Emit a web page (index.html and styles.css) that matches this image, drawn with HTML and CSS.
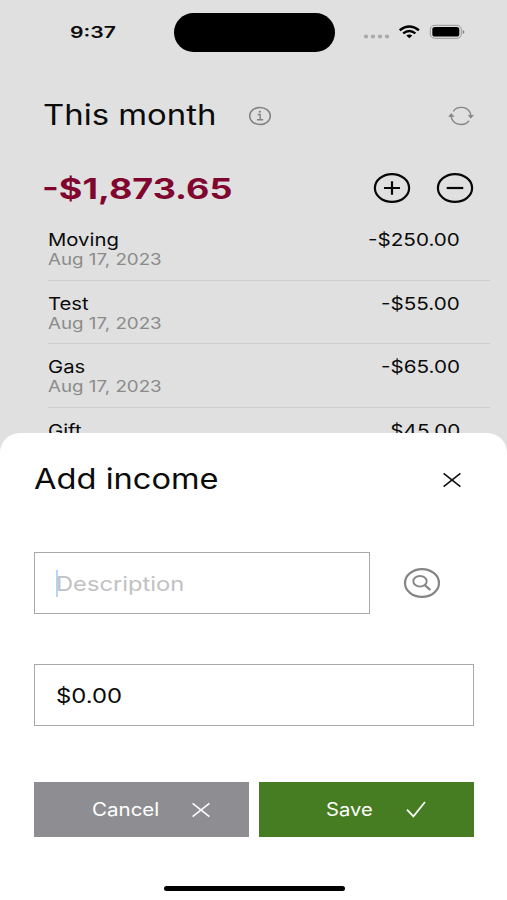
FILE: index.html
```html
<!DOCTYPE html>
<html lang="en">
<head>
<meta charset="utf-8">
<meta name="viewport" content="width=device-width, initial-scale=1">
<title>This month</title>
<link rel="stylesheet" href="styles.css">
</head>
<body>
<div class="phone">
  <main class="screen">
    <header class="status">
      <span class="wide clock">9:37</span>
      <div class="island"></div>
      <svg class="status-icons" width="104" height="20" viewBox="0 0 104 20">
        <g fill="#a9a9a9"><circle cx="4" cy="14.5" r="2.1"/><circle cx="11" cy="14.5" r="2.1"/><circle cx="18" cy="14.5" r="2.1"/><circle cx="25" cy="14.5" r="2.1"/></g>
        <g fill="none" stroke="#000" stroke-width="2.4"><path d="M37.700 8.200Q47.300 0.800 56.900 8.200"/><path d="M41.200 11.400Q47.300 6.700 53.400 11.400"/></g>
        <path d="M44.300 13.600Q47.300 11.200 50.300 13.600L47.300 16.200Z"/>
        <rect x="68.300" y="3.300" width="31" height="13" rx="4.300" fill="none" stroke="#989898"/>
        <rect x="70.300" y="5.100" width="27" height="9.400" rx="2.600"/>
        <path d="M100.700 8v4q1.800-.4 1.800-2t-1.800-2z" fill="#858585"/>
      </svg>
    </header>
    <section class="heading">
      <h1 class="wide title">This month</h1>
      <svg class="info" width="24" height="20" viewBox="0 0 24 20" fill="none" stroke="#828282" stroke-width="1.500">
        <ellipse cx="12" cy="10" rx="10.300" ry="8.600"/>
        <path d="M9.700 8.500h2.500v5M9 13.700h6.200" stroke-width="1.400"/>
        <ellipse cx="11.800" cy="5.700" rx="1.200" ry="1" fill="#828282" stroke="none"/>
      </svg>
      <svg class="refresh" width="26" height="20" viewBox="0 0 26 20" fill="none" stroke="#858585" stroke-width="1.400">
        <path d="M5.300 5.300C8.500.3 17.600-.1 21.200 5.200 22.200 6.600 22.800 8 22.800 9.500M21 14.600C17.600 19.700 8.300 19.900 4.900 14.700 3.800 13.200 3.200 11.800 3.200 10.200"/>
        <path d="M.7 10.500L3.200 7.500 6 10.500ZM20.200 9.300H25.400L22.800 12.300Z" fill="#858585" stroke-width=".6"/>
      </svg>
    </section>
    <section class="balance">
      <span class="wide total">-$1,873.65</span>
      <div class="actions">
        <svg width="38" height="32" viewBox="0 0 38 32" fill="none" stroke="#080808" stroke-width="2.200"><ellipse cx="19" cy="16" rx="17.100" ry="13.900"/><path d="M11 16h16M19 9.300v13.400"/></svg>
        <svg width="38" height="32" viewBox="0 0 38 32" fill="none" stroke="#080808" stroke-width="2.200"><ellipse cx="19" cy="16" rx="17.100" ry="13.900"/><path d="M10.700 16h16.600"/></svg>
      </div>
    </section>
    <ul class="entries">
      <li><div class="entry"><span class="wide name">Moving</span><span class="wide date">Aug 17, 2023</span></div><span class="wide amount">-$250.00</span></li>
      <li><div class="entry"><span class="wide name">Test</span><span class="wide date">Aug 17, 2023</span></div><span class="wide amount">-$55.00</span></li>
      <li><div class="entry"><span class="wide name">Gas</span><span class="wide date">Aug 17, 2023</span></div><span class="wide amount">-$65.00</span></li>
      <li><div class="entry"><span class="wide name">Gift</span></div><span class="wide amount">$45.00</span></li>
    </ul>
  </main>
  <section class="sheet">
    <div class="sheet-head">
      <h2 class="wide sheet-title">Add income</h2>
      <svg width="20" height="16" viewBox="0 0 20 16" fill="none" stroke="#111" stroke-width="1.600"><path d="M1.600 1.300L18.400 14.700M18.400 1.300L1.600 14.700"/></svg>
    </div>
    <div class="row">
      <div class="field description"><i class="caret"></i><span class="wide placeholder">Description</span></div>
      <svg width="38" height="32" viewBox="0 0 38 32" fill="none" stroke="#858587"><ellipse cx="19" cy="16" rx="17" ry="13.900" stroke-width="2.200"/><ellipse cx="17" cy="14.300" rx="6.700" ry="5.300" stroke-width="1.900"/><path d="M21.800 18.200L27.400 23" stroke-width="2.300"/></svg>
    </div>
    <div class="field"><span class="wide value">$0.00</span></div>
    <div class="buttons">
      <div class="button cancel"><span class="wide cancel-label">Cancel</span><svg width="20" height="16" viewBox="0 0 20 16" fill="none" stroke="#fff" stroke-width="1.500"><path d="M1.600 1.300L18.400 14.700M18.400 1.300L1.600 14.700"/></svg></div>
      <div class="button save"><span class="wide save-label">Save</span><svg width="20" height="17" viewBox="0 0 20 17" fill="none" stroke="#fff" stroke-width="1.700"><path d="M1 8.700L7.400 15.400 19 1"/></svg></div>
    </div>
    <div class="home"></div>
  </section>
</div>
</body>
</html>
```
FILE: styles.css
```css
* { box-sizing: border-box; }
body { margin: 0; font-family: Inter, "Liberation Sans", sans-serif; color: #0b0b0b; background: #e0e0e0; }
h1, h2, ul { margin: 0; padding: 0; font-weight: 400; }
svg { display: block; flex: none; }
.phone { width: 507px; height: 900px; overflow: hidden; display: flex; flex-direction: column; }
.screen { height: 433px; flex: none; }

/* Labels use the extended width of the interface type. */
.wide { display: inline-block; white-space: nowrap; transform: scaleX(var(--stretch, 1.19)); transform-origin: left center; }

.status { display: grid; grid-template-columns: 173.500px 161px 1fr; align-items: center; height: 64px; }
.clock { --stretch: 1.32; margin-left: 70px; font-size: 16px; font-weight: 600; }
.island { height: 39px; border-radius: 20px; background: #000; }
.status-icons { margin-left: 27.500px; }

.heading { display: flex; align-items: center; height: 40px; margin-top: 32px; padding: 0 33px 0 42.500px; }
.title { --stretch: 1.175; width: 205.500px; font-size: 28px; line-height: 38px; padding-bottom: 2px; }
.refresh { margin-left: auto; }
.balance { display: flex; align-items: center; justify-content: space-between; height: 40px; margin-top: 32px; padding: 0 33px 0 42px; }
.total { --stretch: 1.285; font-size: 28px; font-weight: 700; color: #80062f; padding-top: 1px; }
.actions { display: flex; gap: 25px; }

.entries { list-style: none; margin: 9px 17px 0 48px; }
.entries li { display: flex; justify-content: space-between; height: 63.700px; padding: 13px 30px 0 0; border-bottom: 1px solid #cdcdcd; }
.entries li:last-child { height: 35px; overflow: hidden; border: 0; }
.entry { display: flex; flex-direction: column; }
.name { --stretch: 1.16; font-size: 17.500px; line-height: 20px; }
.date { --stretch: 1.21; font-size: 15.500px; line-height: 20px; color: #8b8b8b; }
.amount { --stretch: 1.18; font-size: 17.500px; line-height: 20px; transform-origin: right center; }

.sheet { position: relative; flex: 1; padding: 26px 33px 0 34px; border-radius: 20px 20px 0 0; background: #fff; display: flex; flex-direction: column; }
.sheet-head { display: flex; align-items: center; justify-content: space-between; height: 41px; padding-right: 12px; }
.sheet-title { --stretch: 1.165; font-size: 28px; margin-top: -1px; }
.row { display: flex; align-items: center; justify-content: space-between; margin: 52px 0 50px; padding-right: 33.500px; }
.field { height: 62px; flex: none; border: 1.500px solid #aaa; display: flex; align-items: center; padding-left: 21px; }
.description { width: 336px; }
.caret { width: 2px; height: 27px; margin-right: -2px; background: #b5d3fb; }
.placeholder { --stretch: 1.185; font-size: 20px; color: #c1c1c3; padding-top: 2px; }
.value { font-size: 20px; padding-top: 2px; }
.buttons { display: grid; grid-template-columns: 1fr 1fr; gap: 10px; margin-top: 56px; }
.button { height: 55px; display: flex; align-items: center; color: #fff; font-size: 18px; }
.cancel { padding-left: 58px; background: #8e8d92; }
.save { padding-left: 67px; background: #467d22; }
.cancel-label { --stretch: 1.14; width: 99px; }
.save-label { --stretch: 1.12; width: 80px; }
.home { width: 181px; height: 5px; border-radius: 3px; background: #000; margin: 49px 0 0 130px; }
```
